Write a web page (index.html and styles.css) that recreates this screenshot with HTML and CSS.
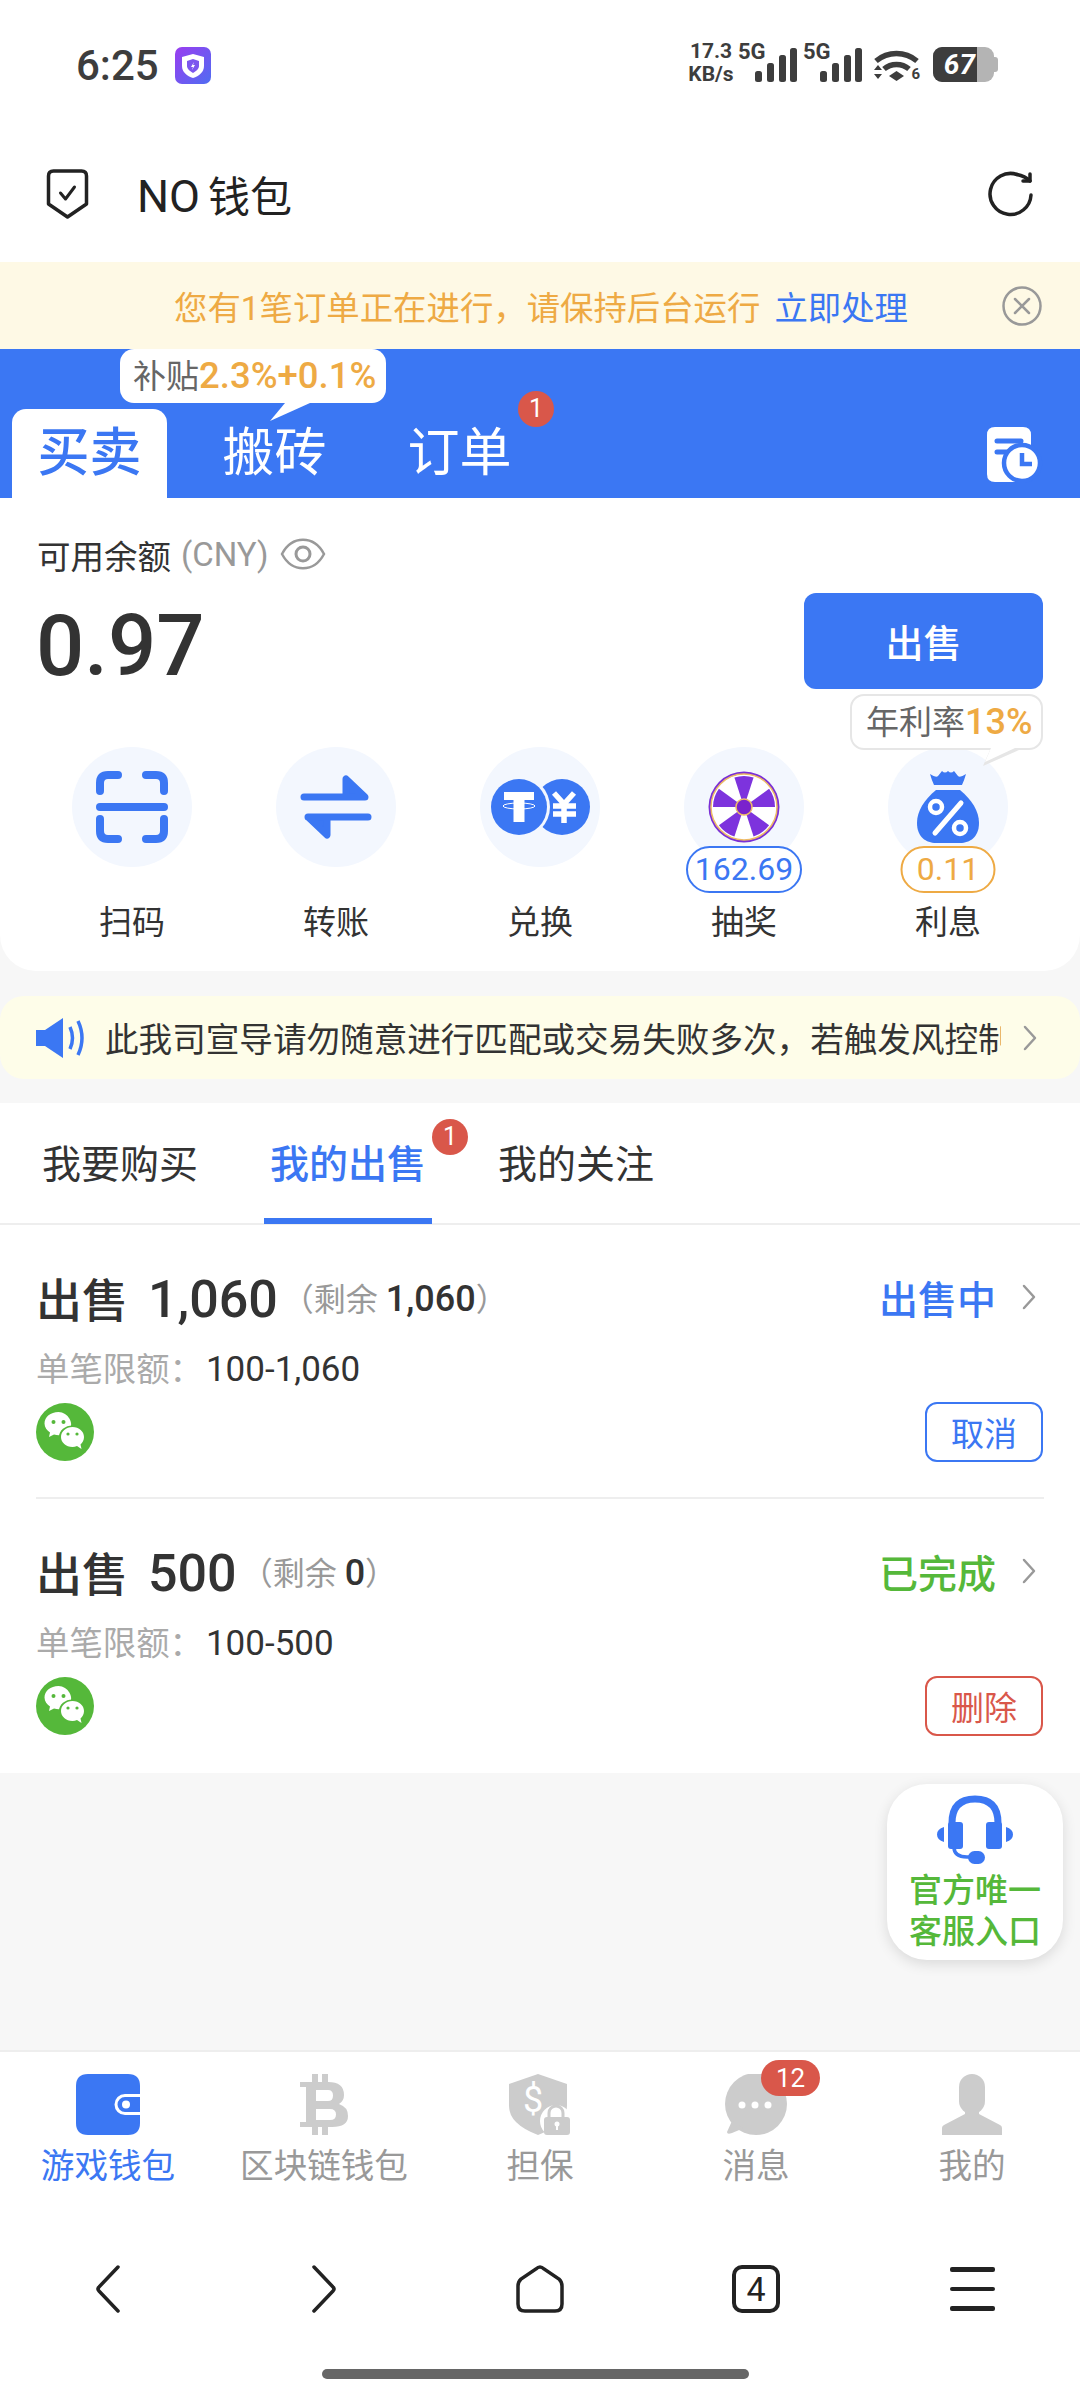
FILE: index.html
```html
<!DOCTYPE html>
<html lang="zh-CN">

<head>
  <meta charset="UTF-8">
  <meta name="viewport" content="width=device-width, initial-scale=1.0">
  <title>NO钱包</title>
  <link rel="stylesheet" href="styles.css">
</head>

<body>
  <!-- status bar -->
  <div class="status">
    <span class="time">6:25</span>
    <svg class="app-icon" viewBox="0 0 36 37">
      <defs>
        <linearGradient id="appg" x1="0" y1="0" x2="1" y2="1">
          <stop offset="0" stop-color="#9a3df0" />
          <stop offset="1" stop-color="#4f6df2" />
        </linearGradient>
      </defs>
      <rect width="36" height="37" rx="7" fill="url(#appg)" />
      <path d="M18 7l11 3v9c0 6-5 10-11 12-6-2-11-6-11-12v-9z" fill="#fff" />
      <path d="M18 12l6 2v5c0 3-3 5-6 7-3-2-6-4-6-7v-5z" fill="#7c56ee" />
      <path d="M19 15l-3 5h2l-1 3 3-5h-2z" fill="#fff" />
    </svg>
    <div class="status-right">
      <div class="speed"><span>17.3</span><span>KB/s</span></div>
      <div class="signal">
        <span class="sig-label">5G</span>
        <svg viewBox="0 0 42 34" width="42" height="34" fill="#3d3d3d">
          <rect x="0" y="23" width="7" height="11" rx="2.5" />
          <rect x="12" y="15" width="7" height="19" rx="2.5" />
          <rect x="24" y="7" width="7" height="27" rx="2.5" />
          <rect x="35" y="0" width="7" height="34" rx="2.5" />
        </svg>
      </div>
      <div class="signal">
        <span class="sig-label">5G</span>
        <svg viewBox="0 0 42 34" width="42" height="34" fill="#3d3d3d">
          <rect x="0" y="23" width="7" height="11" rx="2.5" />
          <rect x="12" y="15" width="7" height="19" rx="2.5" />
          <rect x="24" y="7" width="7" height="27" rx="2.5" />
          <rect x="35" y="0" width="7" height="34" rx="2.5" />
        </svg>
      </div>
      <div class="wifi">
        <svg viewBox="0 0 47 32" width="47" height="32">
          <path d="M3 11C15 1 32 1 44 11" fill="none" stroke="#3d3d3d" stroke-width="5.5" />
          <path d="M11 19C18 13 29 13 36 19" fill="none" stroke="#3d3d3d" stroke-width="5.5" />
          <path d="M16 26l7.500-5 7.500 5-7.500 5z" fill="#3d3d3d" />
          <path d="M1 20l4-5 4 5zM1 24l4 5 4-5z" fill="#3d3d3d" />
        </svg>
        <span class="wifi-six">6</span>
      </div>
      <div class="battery"><div class="battery-level">67</div></div>
    </div>
  </div>

  <!-- title -->
  <header class="head">
    <svg class="shield" viewBox="0 0 44 52" width="45" height="52" fill="none" stroke="#222" stroke-width="3.5"
      stroke-linejoin="round" stroke-linecap="round">
      <path d="M3 8Q3 3 8 3H36Q41 3 41 8V36L22 49 3 36Z" />
      <path d="M15 25L20 31 29 19" stroke-width="3" />
    </svg>
    <h1 class="title"><span class="title-latin">NO</span>钱包</h1>
    <svg class="refresh" viewBox="0 0 46 46" width="46" height="46" fill="none" stroke="#222" stroke-width="3.5"
      stroke-linecap="round" stroke-linejoin="round">
      <path d="M43 24A20.500 20.500 0 1 1 29 3.500" />
      <path d="M42 3V10H35" />
      <path d="M29 3.500Q37 5 42 10" />
    </svg>
  </header>

  <!-- running order banner -->
  <div class="banner">
    <span class="banner-text">您有1笔订单正在进行，请保持后台运行</span>
    <span class="banner-link">立即处理</span>
    <svg class="banner-close" viewBox="0 0 40 40" width="40" height="40" fill="none" stroke="#999" stroke-width="2.500"
      stroke-linecap="round">
      <circle cx="20" cy="20" r="18.500" />
      <path d="M13 13L27 27M27 13L13 27" />
    </svg>
  </div>

  <!-- blue mode tabs -->
  <nav class="modes">
    <a class="mode mode-on">买卖</a>
    <a class="mode">搬砖</a>
    <a class="mode">订单<span class="dot mode-dot">1</span></a>
    <div class="subsidy"><span>补贴</span><b>2.3%+0.1%</b></div>
    <svg class="records" viewBox="0 0 56 56" width="56" height="56">
      <path d="M8 0H36Q44 0 44 8V20L30 55H8Q0 55 0 47V8Q0 0 8 0Z" fill="#fff" />
      <path d="M10 14H34M10 25H22" stroke="#3b77f3" stroke-width="5" stroke-linecap="round" />
      <circle cx="35" cy="36" r="18" fill="#fff" stroke="#3b77f3" stroke-width="4.500" />
      <path d="M35 26V37H45" fill="none" stroke="#3b77f3" stroke-width="4.500" />
    </svg>
  </nav>

  <div class="middle">
    <!-- balance -->
    <section class="card">
      <div class="balance-label">
        <span>可用余额</span><span class="currency">(CNY)</span>
        <svg viewBox="0 0 46 32" width="46" height="32" fill="none" stroke="#999" stroke-width="2.500">
          <path d="M2 16C12 -3 34 -3 44 16 34 35 12 35 2 16Z" />
          <circle cx="23" cy="16" r="7" stroke-width="3" />
        </svg>
      </div>
      <div class="balance-row">
        <div class="amount">0.97</div>
        <button class="sell">出售</button>
      </div>
      <div class="actions">
        <div class="action">
          <div class="action-icon">
            <svg viewBox="0 0 120 120" fill="none" stroke="#3b77f3" stroke-width="8" stroke-linecap="round">
              <path d="M28 44V36Q28 28 36 28H46M74 28H84Q92 28 92 36V44M28 72V84Q28 92 36 92H46M74 92H84Q92 92 92 84V72" />
              <path d="M28 60H92" />
            </svg>
          </div>
          <span>扫码</span>
        </div>
        <div class="action">
          <div class="action-icon">
            <svg viewBox="0 0 120 120" fill="#3b77f3" stroke="#3b77f3" stroke-width="7" stroke-linejoin="round"
              stroke-linecap="round">
              <path d="M28 50H89L70 32V50Z" />
              <path d="M32 70H92M32 70L51 88V70Z" />
            </svg>
          </div>
          <span>转账</span>
        </div>
        <div class="action">
          <div class="action-icon">
            <svg viewBox="0 0 120 120">
              <circle cx="82" cy="60" r="28" fill="#3b77f3" />
              <path d="M74 46L84 57 94 46M73 59H96M73 67H96M84 57V76" fill="none" stroke="#fff" stroke-width="5.500" />
              <circle cx="39" cy="60" r="31" fill="#f3f7fe" />
              <circle cx="39" cy="60" r="28" fill="#3b77f3" />
              <path d="M24 45H54V53H44.500V75H33.500V53H24Z" fill="#fff" />
              <ellipse cx="39" cy="59" rx="16" ry="3" fill="none" stroke="#fff" stroke-width="1" />
            </svg>
          </div>
          <span>兑换</span>
        </div>
        <div class="action">
          <div class="action-icon">
            <svg viewBox="-60 -60 120 120">
              <circle r="35.500" fill="#7a2fd6" />
              <circle r="33" fill="#fff" stroke="#eebb66" stroke-width="1.500" />
              <g fill="#7d33dd">
                <path d="M0 0L-9.580-29.480A31 31 0 0 1 9.580-29.480Z" />
                <path d="M0 0L-9.580-29.480A31 31 0 0 1 9.580-29.480Z" transform="rotate(72)" />
                <path d="M0 0L-9.580-29.480A31 31 0 0 1 9.580-29.480Z" transform="rotate(144)" />
                <path d="M0 0L-9.580-29.480A31 31 0 0 1 9.580-29.480Z" transform="rotate(216)" />
                <path d="M0 0L-9.580-29.480A31 31 0 0 1 9.580-29.480Z" transform="rotate(288)" />
              </g>
              <circle r="8" fill="#7a22cc" stroke="#eebb66" stroke-width="1.500" />
            </svg>
          </div>
          <span class="pill pill-blue">162.69</span>
          <span>抽奖</span>
        </div>
        <div class="action">
          <div class="action-icon">
            <svg viewBox="0 0 120 120">
              <path d="M42 27Q48 31 50 29L54 24Q57 27 60 24 63 27 66 24L70 29Q72 31 78 27 76 34 74 38H46Q44 34 42 27Z" fill="#3b77f3" />
              <path d="M48 43H72C84 53 91 64 91 76 91 90 82 96 72 96H48C38 96 29 90 29 76 29 64 36 53 48 43Z" fill="#3b77f3" />
              <path d="M47 86L73 56" stroke="#fff" stroke-width="5" stroke-linecap="round" />
              <circle cx="48" cy="60" r="6" fill="none" stroke="#fff" stroke-width="4.500" />
              <circle cx="72" cy="81" r="6" fill="none" stroke="#fff" stroke-width="4.500" />
            </svg>
          </div>
          <span class="pill pill-orange">0.11</span>
          <span>利息</span>
          <div class="rate"><span>年利率</span><b>13%</b></div>
        </div>
      </div>
    </section>

    <!-- notice -->
    <div class="notice">
      <svg class="speaker" viewBox="0 0 50 40" width="50" height="40" fill="#3b77f3">
        <path d="M0 12H9L27 0V40L9 28H0Z" />
        <path d="M34 9Q39 20 34 31M42 3Q50 20 42 37" fill="none" stroke="#3b77f3" stroke-width="3.500" />
      </svg>
      <div class="notice-text">此我司宣导请勿随意进行匹配或交易失败多次，若触发风控制度</div>
      <svg class="chev" viewBox="0 0 14 26" width="14" height="26">
        <path d="M2 2L12 13 2 24" />
      </svg>
    </div>
  </div>

  <!-- list tabs -->
  <div class="list-tabs">
    <a class="list-tab">我要购买</a>
    <a class="list-tab list-tab-on">我的出售<span class="dot list-dot">1</span></a>
    <a class="list-tab">我的关注</a>
  </div>

  <!-- orders -->
  <div class="orders">
    <div class="order">
      <div class="order-top">
        <div class="order-name">出售<b>1,060</b></div>
        <div class="order-left">（剩余 <b>1,060</b>）</div>
        <span class="order-state state-blue">出售中</span>
        <svg class="chev" viewBox="0 0 14 26" width="14" height="26">
          <path d="M2 2L12 13 2 24" />
        </svg>
      </div>
      <div class="order-limit"><span>单笔限额：</span>100-1,060</div>
      <div class="order-bottom">
        <svg class="wechat" viewBox="0 0 58 58" width="58" height="58">
          <circle cx="29" cy="29" r="29" fill="#55b83a" />
          <path d="M22.500 9C14.500 9 8.500 14 8.500 20.500 8.500 24.500 11 27.500 14 29.500L13 34 18 31.500C24 33 30 32 33 27 39 21 32 9 22.500 9Z" fill="#fff" />
          <ellipse cx="36.500" cy="34" rx="13.500" ry="11.500" fill="#55b83a" />
          <path d="M36.500 24C30 24 25 28.500 25 34 25 39.500 30 44 36.500 44 38 44 39.500 43.500 41 43L45.500 46 44.500 41.500C46.500 39.500 48 37 48 34 48 28.500 43 24 36.500 24Z" fill="#fff" />
          <circle cx="17.500" cy="19" r="2" fill="#55b83a" />
          <circle cx="27.500" cy="19" r="2" fill="#55b83a" />
          <circle cx="32" cy="31" r="1.600" fill="#55b83a" />
          <circle cx="41" cy="31" r="1.600" fill="#55b83a" />
        </svg>
        <button class="order-btn btn-blue">取消</button>
      </div>
    </div>
    <div class="order">
      <div class="order-top">
        <div class="order-name">出售<b>500</b></div>
        <div class="order-left">（剩余 <b>0</b>）</div>
        <span class="order-state state-green">已完成</span>
        <svg class="chev" viewBox="0 0 14 26" width="14" height="26">
          <path d="M2 2L12 13 2 24" />
        </svg>
      </div>
      <div class="order-limit"><span>单笔限额：</span>100-500</div>
      <div class="order-bottom">
        <svg class="wechat" viewBox="0 0 58 58" width="58" height="58">
          <circle cx="29" cy="29" r="29" fill="#55b83a" />
          <path d="M22.500 9C14.500 9 8.500 14 8.500 20.500 8.500 24.500 11 27.500 14 29.500L13 34 18 31.500C24 33 30 32 33 27 39 21 32 9 22.500 9Z" fill="#fff" />
          <ellipse cx="36.500" cy="34" rx="13.500" ry="11.500" fill="#55b83a" />
          <path d="M36.500 24C30 24 25 28.500 25 34 25 39.500 30 44 36.500 44 38 44 39.500 43.500 41 43L45.500 46 44.500 41.500C46.500 39.500 48 37 48 34 48 28.500 43 24 36.500 24Z" fill="#fff" />
          <circle cx="17.500" cy="19" r="2" fill="#55b83a" />
          <circle cx="27.500" cy="19" r="2" fill="#55b83a" />
          <circle cx="32" cy="31" r="1.600" fill="#55b83a" />
          <circle cx="41" cy="31" r="1.600" fill="#55b83a" />
        </svg>
        <button class="order-btn btn-red">删除</button>
      </div>
    </div>
  </div>

  <!-- empty area with floating support button -->
  <div class="filler">
    <div class="support">
      <svg viewBox="0 0 76 70" width="76" height="70" fill="#3b77f3">
        <path d="M15 36V28Q15 4 38 4 61 4 61 28V36" fill="none" stroke="#3b77f3" stroke-width="7" />
        <rect x="11" y="27" width="15" height="27" rx="3" />
        <rect x="49" y="27" width="16" height="27" rx="3" />
        <path d="M7 32V47Q0 45 0 39.500 0 34 7 32ZM69 32V47Q76 45 76 39.500 76 34 69 32Z" />
        <path d="M17 52Q17 62 30 62H38" fill="none" stroke="#3b77f3" stroke-width="3.500" />
        <rect x="31" y="56" width="17" height="13" rx="6.500" />
      </svg>
      <div class="support-text">官方唯一<br>客服入口</div>
    </div>
  </div>

  <footer class="footer">
    <div class="tabbar">
      <div class="tabbar-item tabbar-on">
        <svg viewBox="0 0 64 61" width="64" height="61">
          <path d="M12 0H52Q64 0 64 12V49Q64 61 52 61H12Q0 61 0 49V12Q0 0 12 0Z" fill="#3b77f3" />
          <path d="M64 21.500H49A9 9 0 0 0 49 39.500H64" fill="none" stroke="#fff" stroke-width="3" />
          <circle cx="50" cy="30.500" r="4" fill="#fff" />
        </svg>
        <span>游戏钱包</span>
      </div>
      <div class="tabbar-item">
        <svg viewBox="0 0 48 61" width="48" height="61" fill="#ccc">
          <path d="M12 0h6v10h-6zM22 0h6v10h-6zM12 51h6v10h-6zM22 51h6v10h-6z" />
          <path fill-rule="evenodd"
            d="M0 8H28Q44 8 44 21 44 27 39 30 48 33 48 42 48 53 32 53H0V48H6V13H0ZM16 16V27H28Q33 27 33 21.500 33 16 28 16ZM16 35V46H30Q36 46 36 40.500 36 35 30 35Z" />
        </svg>
        <span>区块链钱包</span>
      </div>
      <div class="tabbar-item">
        <svg viewBox="0 0 62 61" width="62" height="61" fill="#ccc">
          <path d="M29 0L58 10V32Q58 50 29 61 0 50 0 32V10Z" />
          <text x="14" y="38" class="guard-sign">$</text>
          <circle cx="47" cy="47" r="16" fill="#fff" />
          <path d="M41 43V39A7 7 0 0 1 55 39V43" fill="none" stroke="#ccc" stroke-width="3" transform="translate(-1 0)" />
          <rect x="35" y="43" width="26" height="18" rx="3" />
          <circle cx="48" cy="50" r="2.500" fill="#fff" />
          <path d="M48 50V56" stroke="#fff" stroke-width="2" />
        </svg>
        <span>担保</span>
      </div>
      <div class="tabbar-item">
        <svg viewBox="0 0 64 61" width="64" height="61" fill="#ccc">
          <circle cx="32" cy="30" r="31" />
          <path d="M8 47L3 58Q3 61 8 59L20 54Z" />
          <circle cx="18" cy="31" r="3.500" fill="#fff" />
          <circle cx="31" cy="31" r="3.500" fill="#fff" />
          <circle cx="44" cy="31" r="3.500" fill="#fff" />
        </svg>
        <span>消息</span>
        <span class="msg-count">12</span>
      </div>
      <div class="tabbar-item">
        <svg viewBox="0 0 62 61" width="62" height="61" fill="#ccc">
          <rect x="18" y="0" width="26" height="40" rx="13" />
          <path d="M24 34H38V40L59 51Q61 52 61 54V61H1V54Q1 52 3 51L24 40Z" />
        </svg>
        <span>我的</span>
      </div>
    </div>
    <div class="browser">
      <svg viewBox="0 0 24 48" width="24" height="48" class="browser-line">
        <path d="M22 2L3 22Q1 24 3 26L22 46" />
      </svg>
      <svg viewBox="0 0 24 48" width="24" height="48" class="browser-line">
        <path d="M2 2L21 22Q23 24 21 26L2 46" />
      </svg>
      <svg viewBox="0 0 50 50" width="50" height="50" class="browser-line">
        <path d="M25 3Q27 3 29 5L44 15Q47 18 47 22V40Q47 47 40 47H10Q3 47 3 40V22Q3 18 6 15L21 5Q23 3 25 3Z" />
      </svg>
      <div class="page-count">4</div>
      <div class="menu"><i></i><i></i><i></i></div>
    </div>
    <div class="home-bar"></div>
  </footer>
</body>

</html>
```

FILE: styles.css
```css
* {
  box-sizing: border-box;
}

body {
  position: relative;
  display: flex;
  flex-direction: column;
  width: 1080px;
  height: 2400px;
  margin: 0;
  overflow: hidden;
  background: #fff;
  color: #333;
  font-family: Roboto, "Noto Sans CJK SC", sans-serif;
}

b {
  font-weight: 500;
}

button {
  font-family: inherit;
}

/* status bar */
.status {
  display: flex;
  align-items: center;
  flex: none;
  height: 100px;
  padding: 30px 82px 0 76px;
}

.time {
  font-size: 42px;
  font-weight: 500;
  color: #3d3d3d;
}

.app-icon {
  width: 36px;
  height: 37px;
  margin-left: 16px;
}

.status-right {
  display: flex;
  align-items: flex-end;
  height: 40px;
  margin-bottom: 7px;
  margin-left: auto;
  color: #3d3d3d;
}

.speed {
  display: flex;
  flex-direction: column;
  align-items: center;
  width: 46px;
  margin-bottom: -4px;
  font-size: 21px;
  font-weight: 700;
  line-height: 23px;
}

.signal {
  position: relative;
  display: flex;
  justify-content: flex-end;
  width: 59px;
  margin-left: 4px;
}

.signal + .signal {
  margin-left: 6px;
}

.sig-label {
  position: absolute;
  left: 0;
  top: -6px;
  font-size: 22px;
  font-weight: 700;
  line-height: 20px;
}

.wifi {
  position: relative;
  width: 47px;
  height: 32px;
  margin-left: 11px;
}

.wifi svg {
  display: block;
}

.wifi-six {
  position: absolute;
  right: 0;
  bottom: 0;
  font-size: 15px;
  font-weight: 700;
  line-height: 15px;
}

.battery {
  position: relative;
  width: 61px;
  height: 35px;
  margin-left: 13px;
  margin-right: 4px;
  border-radius: 9px;
  background: #b4b4b4;
}

.battery::after {
  content: "";
  position: absolute;
  right: -4px;
  top: 10px;
  width: 4px;
  height: 15px;
  border-radius: 0 3px 3px 0;
  background: #b4b4b4;
}

.battery-level {
  width: 44px;
  height: 35px;
  padding-right: 2px;
  border-radius: 9px 0 0 9px;
  background: #3d3d3d;
  color: #fff;
  font-size: 28px;
  font-style: italic;
  font-weight: 700;
  line-height: 35px;
  text-align: right;
}

/* title */
.head {
  display: flex;
  align-items: center;
  flex: none;
  height: 162px;
  padding: 25px 46px 0 45px;
}

.title {
  margin: 0 0 0 47px;
  font-size: 42px;
  font-weight: 400;
  color: #222;
}

.title-latin {
  margin-right: 8px;
  font-size: 45px;
}

.refresh {
  margin-left: auto;
}

/* banner */
.banner {
  display: flex;
  align-items: center;
  flex: none;
  height: 87px;
  padding: 0 38px 0 174px;
  background: #fef9e5;
  font-size: 33.4px;
}

.banner-text {
  color: #eeaa44;
}

.banner-link {
  margin-left: 14px;
  color: #3b77f3;
}

.banner-close {
  margin-left: auto;
}

/* blue tabs */
.modes {
  position: relative;
  display: flex;
  align-items: flex-end;
  flex: none;
  gap: 30px;
  height: 149px;
  padding-left: 12px;
  background: #3b77f3;
}

.mode {
  position: relative;
  width: 155px;
  height: 89px;
  color: #fff;
  font-size: 52px;
  line-height: 89px;
  text-align: center;
}

.mode-on {
  border-radius: 14px 14px 0 0;
  background: #fff;
  color: #3b77f3;
  font-weight: 500;
}

.dot {
  position: absolute;
  width: 36px;
  height: 36px;
  border-radius: 50%;
  background: #d9574a;
  color: #fff;
  font-size: 25px;
  font-weight: 400;
  line-height: 36px;
  text-align: center;
}

.mode-dot {
  left: 136px;
  top: -18px;
}

.subsidy {
  position: absolute;
  left: 120px;
  top: 0;
  width: 266px;
  height: 54px;
  padding-left: 13px;
  border-radius: 14px;
  background: #fff;
  color: #666;
  font-size: 33px;
  line-height: 54px;
  white-space: nowrap;
}

.subsidy::after {
  content: "";
  position: absolute;
  left: 150px;
  top: 54px;
  width: 40px;
  height: 18px;
  background: #fff;
  clip-path: polygon(15px 0, 40px 0, 0 18px);
}

.subsidy b {
  color: #eeaa44;
  font-size: 36.5px;
}

.records {
  position: absolute;
  right: 37px;
  top: 78px;
}

/* balance card and notice on the gray page */
.middle {
  flex: none;
  padding-bottom: 24px;
  background: #f7f7f7;
}

.card {
  height: 473px;
  padding-top: 34px;
  border-radius: 0 0 36px 36px;
  background: #fff;
}

.balance-label {
  display: flex;
  align-items: center;
  height: 44px;
  padding-left: 37px;
  font-size: 33.5px;
}

.currency {
  margin: 0 11px 0 10px;
  color: #999;
  font-size: 33px;
}

.balance-row {
  display: flex;
  align-items: center;
  justify-content: space-between;
  height: 96px;
  margin-top: 17px;
  padding: 0 37px 0 36px;
}

.amount {
  padding-top: 9px;
  font-size: 85px;
  font-weight: 500;
  color: #333;
}

.sell {
  width: 239px;
  height: 96px;
  padding-bottom: 3px;
  border: 0;
  border-radius: 12px;
  background: #3b77f3;
  color: #fff;
  font-size: 38px;
  font-weight: 500;
}

.actions {
  display: grid;
  grid-template-columns: repeat(5, 204px);
  margin-top: 58px;
  padding-left: 30px;
}

.action {
  position: relative;
  display: flex;
  flex-direction: column;
  align-items: center;
  font-size: 33px;
  line-height: 44px;
}

.action-icon {
  width: 120px;
  height: 120px;
  margin-bottom: 34px;
  border-radius: 50%;
  background: #f3f7fe;
}

.action-icon svg {
  display: block;
  width: 120px;
  height: 120px;
}

.pill {
  position: absolute;
  left: 50%;
  top: 99px;
  height: 47px;
  border: 2.5px solid;
  border-radius: 24px;
  background: #fff;
  font-size: 32px;
  line-height: 42px;
  text-align: center;
  transform: translateX(-50%);
}

.pill-blue {
  width: 116px;
  border-color: #3b77f3;
  color: #3b77f3;
}

.pill-orange {
  width: 95px;
  border-color: #eeaa44;
  color: #eeaa44;
}

.rate {
  position: absolute;
  right: 7px;
  top: -53px;
  width: 193px;
  height: 56px;
  padding-left: 14px;
  border: 2px solid #e6e6e6;
  border-radius: 14px;
  background: #fff;
  color: #666;
  font-size: 33px;
  line-height: 52px;
  white-space: nowrap;
}

.rate::before,
.rate::after {
  content: "";
  position: absolute;
  left: 131px;
  top: 54px;
  width: 36px;
  height: 16px;
  clip-path: polygon(7px 0, 36px 0, 0 16px);
}

.rate::before {
  background: #e6e6e6;
}

/* white inside of the tail, on top of the box border */
.rate::after {
  top: 52px;
  left: 133px;
  width: 30px;
  height: 14px;
  background: #fff;
  clip-path: polygon(6px 0, 30px 0, 0 14px);
}

.rate b {
  color: #eeaa44;
  font-size: 36px;
}

.notice {
  display: flex;
  align-items: center;
  height: 83px;
  margin-top: 25px;
  padding: 0 43px 0 36px;
  border-radius: 24px;
  background: #fefde9;
  font-size: 33.6px;
}

.notice-text {
  flex: none;
  width: 896px;
  margin-left: 19px;
  overflow: hidden;
  white-space: nowrap;
}

.chev {
  flex: none;
  fill: none;
  stroke: #999;
  stroke-width: 2.5;
  stroke-linecap: round;
  stroke-linejoin: round;
}

.notice .chev {
  margin-left: 22px;
}

/* list tabs */
.list-tabs {
  display: flex;
  flex: none;
  gap: 60px;
  height: 122px;
  padding-left: 36px;
  border-bottom: 2px solid #eee;
}

.list-tab {
  position: relative;
  width: 168px;
  height: 121px;
  padding-top: 32px;
  border-bottom: 6px solid transparent;
  font-size: 39px;
  line-height: 60px;
  text-align: center;
  white-space: nowrap;
}

.list-tab-on {
  border-bottom-color: #3b77f3;
  color: #3b77f3;
  font-weight: 500;
}

.list-dot {
  left: 168px;
  top: 16px;
}

/* orders */
.orders {
  flex: none;
}

.order {
  height: 274px;
  margin: 0 36px;
  padding-top: 44px;
  border-bottom: 2px solid #eee;
}

.order:last-child {
  border-bottom: 0;
}

.order-top {
  display: flex;
  align-items: center;
  height: 56px;
  padding-right: 8px;
}

.order-name {
  font-size: 46px;
  font-weight: 500;
  color: #333;
}

.order-name b {
  margin-left: 20px;
  font-size: 52px;
}

.order-left {
  margin-left: 4px;
  color: #999;
  font-size: 32px;
}

.order-left b {
  color: #333;
  font-size: 36px;
}

.order-state {
  margin-left: auto;
  margin-right: 26px;
  font-size: 39px;
  font-weight: 500;
}

.state-blue {
  color: #3b77f3;
}

.state-green {
  color: #55b83a;
}

.order-limit {
  height: 44px;
  margin-top: 23px;
  font-size: 35px;
  line-height: 44px;
}

.order-limit span {
  margin-right: 3px;
  color: #aaa;
  font-size: 33.4px;
}

.order-bottom {
  display: flex;
  align-items: center;
  justify-content: space-between;
  height: 60px;
  margin-top: 10px;
  padding-right: 1px;
}

.order-btn {
  width: 118px;
  height: 60px;
  border: 2.5px solid;
  border-radius: 12px;
  background: #fff;
  font-size: 33px;
}

.btn-blue {
  border-color: #3b77f3;
  color: #3b77f3;
}

.btn-red {
  border-color: #d9574a;
  color: #d9574a;
}

/* gray filler and support button */
.filler {
  position: relative;
  flex: 1;
  background: #f7f7f7;
}

.support {
  position: absolute;
  right: 17px;
  top: 11px;
  display: flex;
  flex-direction: column;
  align-items: center;
  width: 176px;
  height: 176px;
  padding-top: 11px;
  border-radius: 40px;
  background: #fff;
  box-shadow: 0 4px 14px rgba(0, 0, 0, .12);
}

.support-text {
  margin-top: 5px;
  color: #55b83a;
  font-size: 33px;
  font-weight: 500;
  line-height: 41px;
  text-align: center;
}

/* bottom tabs */
.footer {
  flex: none;
  height: 350px;
  border-top: 2px solid #eee;
  background: #fff;
}

.tabbar {
  display: grid;
  grid-template-columns: repeat(5, 216px);
  padding-top: 22px;
}

.tabbar-item {
  position: relative;
  display: flex;
  flex-direction: column;
  align-items: center;
  color: #999;
  font-size: 33.6px;
  line-height: 44px;
}

.tabbar-item svg {
  margin-bottom: 10px;
}

.tabbar-on {
  color: #3b77f3;
}

.guard-sign {
  font-size: 36px;
  fill: #fff;
}

.msg-count {
  position: absolute;
  left: 113px;
  top: -14px;
  width: 59px;
  height: 36px;
  border-radius: 18px;
  background: #d9574a;
  color: #fff;
  font-size: 26px;
  line-height: 36px;
  text-align: center;
}

/* browser toolbar */
.browser {
  display: grid;
  grid-template-columns: repeat(5, 216px);
  justify-items: center;
  align-items: center;
  height: 48px;
  margin-top: 75px;
}

.browser-line {
  fill: none;
  stroke: #222;
  stroke-width: 3.5;
  stroke-linecap: round;
}

.page-count {
  width: 48px;
  height: 48px;
  border: 4px solid #222;
  border-radius: 10px;
  color: #222;
  font-size: 34px;
  line-height: 40px;
  text-align: center;
}

.menu {
  display: flex;
  flex-direction: column;
  gap: 15px;
  width: 45px;
}

.menu i {
  display: block;
  height: 4.5px;
  border-radius: 2px;
  background: #222;
}

.home-bar {
  width: 427px;
  height: 10px;
  margin: 57px 0 0 322px;
  border-radius: 5px;
  background: #666;
}
```
